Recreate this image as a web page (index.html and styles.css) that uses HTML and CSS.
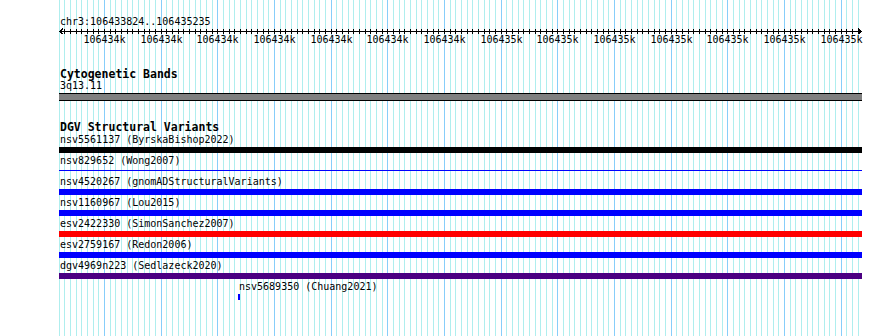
FILE: index.html
```html
<!DOCTYPE html>
<html lang="en">
<head>
  <meta charset="UTF-8" />
  <meta name="viewport" content="width=device-width, initial-scale=1.0" />
  <title>chr3:106433824..106435235</title>
  <link rel="stylesheet" href="styles.css">
</head>
<body>
  <div class="view">
    <div class="grid" id="grid"></div>

    <div class="ruler">
      <div class="locus">chr3:106433824..106435235</div>
      <svg class="axis" id="axis" width="803" height="6"></svg>
      <div class="tick-labels" id="tickLabels"></div>
    </div>

    <div class="track cyto">
      <div class="track-title">Cytogenetic Bands</div>
      <div class="band-name">3q13.11</div>
      <div class="band"></div>
    </div>

    <div class="track dgv">
      <div class="track-title">DGV Structural Variants</div>

      <div class="feature">
        <div class="feature-label">nsv5561137 (ByrskaBishop2022)</div>
        <div class="feature-bar black"></div>
      </div>
      <div class="feature">
        <div class="feature-label">nsv829652 (Wong2007)</div>
        <div class="feature-bar blue thin"></div>
      </div>
      <div class="feature">
        <div class="feature-label">nsv4520267 (gnomADStructuralVariants)</div>
        <div class="feature-bar blue"></div>
      </div>
      <div class="feature">
        <div class="feature-label">nsv1160967 (Lou2015)</div>
        <div class="feature-bar blue"></div>
      </div>
      <div class="feature">
        <div class="feature-label">esv2422330 (SimonSanchez2007)</div>
        <div class="feature-bar red"></div>
      </div>
      <div class="feature">
        <div class="feature-label">esv2759167 (Redon2006)</div>
        <div class="feature-bar blue"></div>
      </div>
      <div class="feature">
        <div class="feature-label">dgv4969n223 (Sedlazeck2020)</div>
        <div class="feature-bar purple"></div>
      </div>
      <div class="feature" style="margin-left: 179px;">
        <div class="feature-label">nsv5689350 (Chuang2021)</div>
        <div class="feature-bar blue" style="width: 2px;"></div>
      </div>
    </div>
  </div>

  <script>
    // grid lines every 10bp, major every 100bp
    var step = 17 / 3;
    var grid = document.getElementById("grid");
    var axis = document.getElementById("axis");
    var labels = document.getElementById("tickLabels");

    var svg = '<path d="M1 3.5 H802 M4 0.5 L1 3.5 L4 6.5 M799 0.5 L802 3.5 L799 6.5" />';
    var lines = "";
    var text = "";

    for (var k = 0; k <= 141; k++) {
      var x = Math.round(k * step - 0.5);
      var major = k % 10 === 8;
      lines += '<div class="grid-line' + (major ? ' major' : '') + '" style="left: ' + x + 'px;"></div>';
      if (k > 0) svg += '<path d="M' + (x + 0.5) + ' 1 V6" />';
      if (major) {
        var bp = 106433900 + (k - 8) * 10;
        var kb = Math.floor((bp + 499) / 1000);
        text += '<div class="tick-label" style="left: ' + (x + 0.5 - 30) + 'px;">' + kb + 'k</div>';
      }
    }

    grid.innerHTML = lines;
    axis.innerHTML = svg;
    labels.innerHTML = text;
  </script>
</body>
</html>
```

FILE: styles.css
```css
* {
  box-sizing: border-box;
}

body {
  margin: 0;
  background: #ffffff;
  font-family: "DejaVu Sans Mono", "Liberation Mono", monospace;
  font-size: 10px;
  color: #000;
}

.view {
  position: relative;
  margin-left: 59px;
  width: 803px;
  min-height: 100vh;
}

.grid {
  position: absolute;
  top: 0;
  left: 0;
  right: 0;
  bottom: 0;
  z-index: 0;
}

.grid-line {
  position: absolute;
  top: 0;
  bottom: 0;
  width: 1px;
  background: #afeeee;
}

.grid-line.major {
  background: #87cefa;
}

.ruler,
.track {
  position: relative;
  z-index: 1;
}

.ruler {
  padding-top: 16px;
}

.locus {
  line-height: 12px;
  padding-left: 1px;
}

.axis {
  display: block;
  stroke: #000;
  stroke-width: 1;
  fill: none;
  shape-rendering: crispEdges;
}

.tick-labels {
  position: relative;
  height: 12px;
  line-height: 12px;
}

.tick-label {
  position: absolute;
  top: 0;
  width: 60px;
  text-align: center;
}

.track-title {
  font-weight: bold;
  font-size: 11.5px;
  line-height: 12px;
  padding-left: 1px;
}

.cyto {
  margin-top: 22px;
}

.band-name {
  line-height: 12px;
  padding-left: 1px;
}

.band {
  margin-top: 1px;
  height: 8px;
  background: #808080;
  border-top: 1px solid #000;
  border-bottom: 1px solid #000;
}

.dgv {
  margin-top: 20px;
}

.dgv .track-title {
  line-height: 13px;
}

.feature {
  height: 21px;
}

.feature-label {
  line-height: 12px;
  padding-left: 1px;
  white-space: nowrap;
}

.feature-bar {
  margin-top: 1px;
  height: 6px;
}

.feature-bar.thin {
  margin-top: 3px;
  height: 1px;
}

.black {
  background: #000;
}

.blue {
  background: #0000ff;
}

.red {
  background: #ff0000;
}

.purple {
  background: #4b0082;
}
```
